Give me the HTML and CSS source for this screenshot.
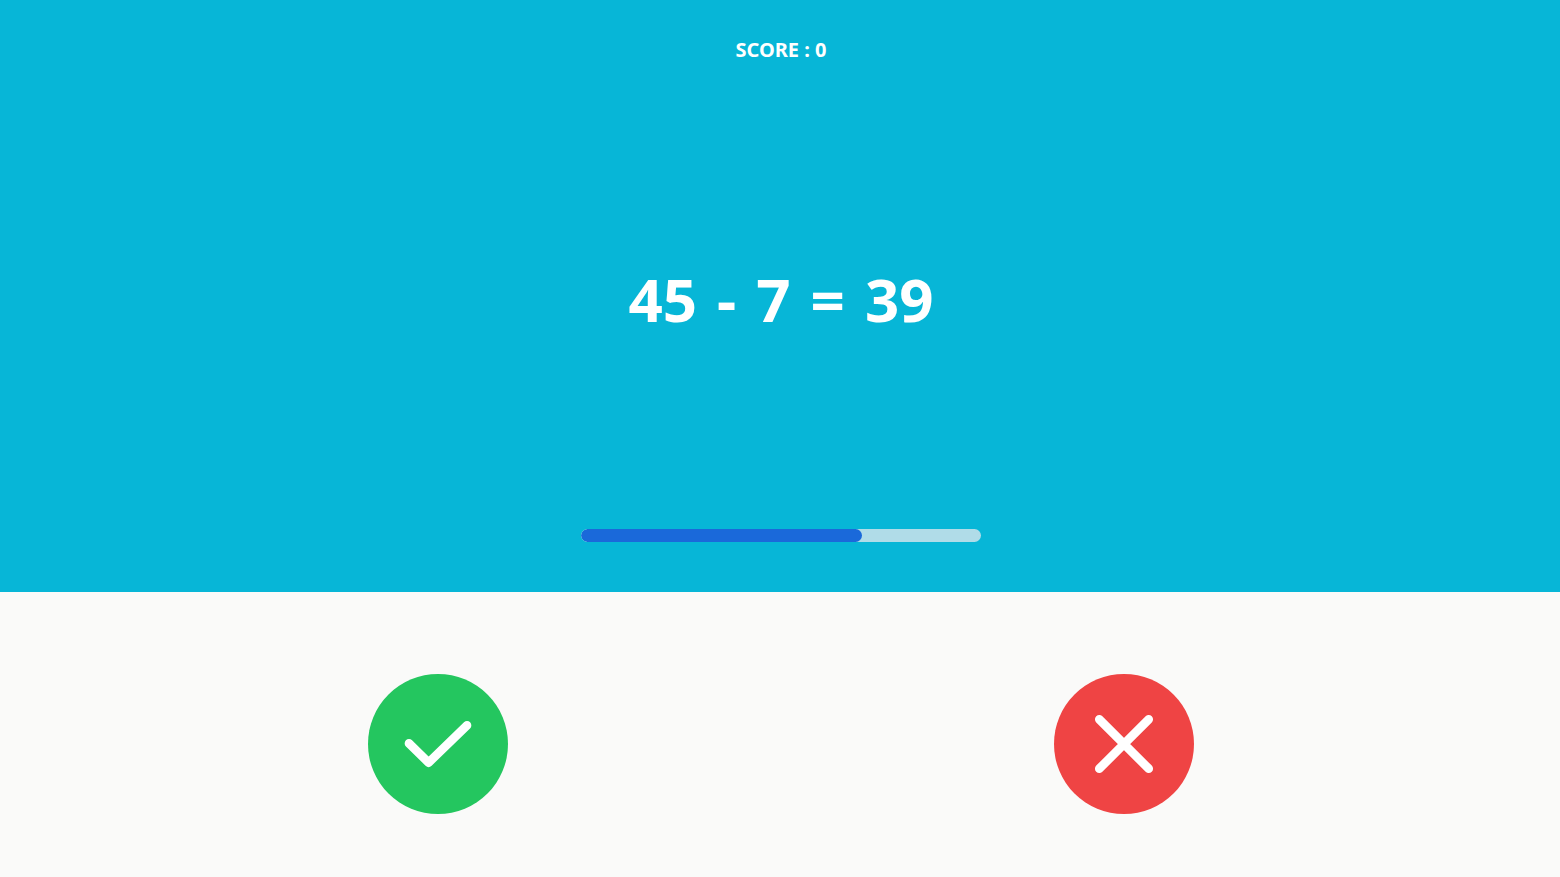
FILE: index.html
```html
<!DOCTYPE html>
<html lang="en">
<head>
<meta charset="utf-8">
<meta name="viewport" content="width=device-width, initial-scale=1">
<title>Quick Math</title>
<link rel="stylesheet" href="styles.css">
</head>
<body>
<main class="game">
  <section class="board">
    <p class="score">SCORE : 0</p>
    <h1 class="equation">
      <span>45</span>
      <span>-</span>
      <span>7</span>
      <span>=</span>
      <span>39</span>
    </h1>
    <div class="timer" role="progressbar" aria-label="Time left" aria-valuemin="0" aria-valuemax="100" aria-valuenow="70">
      <div class="timer-fill" style="width: 70.25%"></div>
    </div>
  </section>
  <section class="answers">
    <button class="answer answer-true" type="button" aria-label="True">
      <svg class="icon" viewBox="0 0 80 80" stroke-width="8.7" aria-hidden="true"><path d="M11 39.400 30.600 58.600 69 21.400"/></svg>
    </button>
    <button class="answer answer-false" type="button" aria-label="False">
      <svg class="icon" viewBox="0 0 80 80" stroke-width="8.7" aria-hidden="true"><path d="M15.300 15.300 64.700 64.700M64.700 15.300 15.300 64.700"/></svg>
    </button>
  </section>
</main>
</body>
</html>
```
FILE: styles.css
```css
* {
  box-sizing: border-box;
}

body {
  margin: 0;
  font-family: "Noto Sans", "Open Sans", sans-serif;
  background: #fafaf9;
}

.game {
  display: grid;
  grid-template-rows: 592fr 285fr;
  min-height: 100vh;
}

.board {
  display: flex;
  flex-direction: column;
  align-items: center;
  justify-content: space-between;
  padding: 36px 20px 50px 22px;
  background: #07b6d7;
  color: #fff;
}

.score {
  margin: 0 0 4px;
  font-size: 20px;
  font-weight: 700;
  line-height: 28px;
}

.equation {
  display: flex;
  flex-wrap: wrap;
  justify-content: center;
  gap: 20px;
  margin: 0;
  font-size: 60px;
  font-weight: 700;
  line-height: 60px;
}

.timer {
  width: 400px;
  max-width: 100%;
  height: 13px;
  border-radius: 7px;
  background: #b0dce8;
  overflow: hidden;
}

.timer-fill {
  height: 100%;
  border-radius: 7px;
  background: #1a69da;
}

.answers {
  display: flex;
  align-items: center;
  justify-content: space-around;
  padding: 19px 93px 0 95px;
}

.answer {
  display: grid;
  place-items: center;
  width: 140px;
  height: 140px;
  padding: 0;
  border: 0;
  border-radius: 50%;
  cursor: pointer;
}

.answer-true {
  background: #24c65f;
}

.answer-false {
  background: #ef4444;
}

.icon {
  width: 80px;
  height: 80px;
  fill: none;
  stroke: #fff;
  stroke-linecap: round;
  stroke-linejoin: round;
}
```
